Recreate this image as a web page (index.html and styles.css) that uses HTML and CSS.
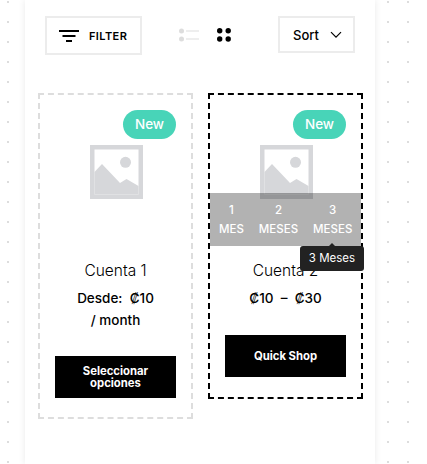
FILE: index.html
```html
<!DOCTYPE html>
<html lang="es">
<head>
<meta charset="utf-8">
<title>Shop</title>
<link rel="stylesheet" href="styles.css">
</head>
<body>
<main class="sheet">
  <div class="toolbar">
    <button class="filter">
      <svg width="20" height="12" viewBox="0 0 20 12"><path d="M0 1h20M3.500 6h13M7 11h6" stroke="#000" stroke-width="2"/></svg>
      <span>FILTER</span>
    </button>
    <div class="views">
      <svg width="20" height="14" viewBox="0 0 20 14"><circle cx="2.500" cy="3" r="2.500" fill="#ddd"/><circle cx="2.500" cy="11" r="2.500" fill="#ddd"/><path d="M7 3h13M7 11h13" stroke="#ddd"/></svg>
      <svg width="14" height="14" viewBox="0 0 14 14"><circle cx="2.700" cy="2.700" r="2.700"/><circle cx="11.200" cy="2.700" r="2.700"/><circle cx="2.700" cy="11" r="2.700"/><circle cx="11.200" cy="11" r="2.700"/></svg>
    </div>
    <button class="sort">
      <span>Sort</span>
      <svg width="12" height="8" viewBox="0 0 12 8"><path d="M1 1.200l5 5 5-5" fill="none" stroke="#000" stroke-width="1.200"/></svg>
    </button>
  </div>
  <div class="grid">
    <article class="card">
      <span class="badge">New</span>
      <div class="thumb">
        <svg class="placeholder" width="53" height="54" viewBox="0 0 53 54"><rect width="53" height="54" fill="#d6d7da"/><rect x="4.500" y="4.500" width="44" height="45" fill="#fff"/><path d="M4.500 27l7.500-8 18 19 6.500-4 12 7v8.500h-44z" fill="#d6d7da"/><circle cx="35.500" cy="17.300" r="5.500" fill="#d6d7da"/></svg>
      </div>
      <h3 class="name">Cuenta 1</h3>
      <p class="price">Desde: &nbsp;₡10<br>/ month</p>
      <a class="cta">Seleccionar<br>opciones</a>
    </article>
    <article class="card card-active">
      <span class="badge">New</span>
      <div class="thumb">
        <svg class="placeholder" width="53" height="54" viewBox="0 0 53 54"><rect width="53" height="54" fill="#d6d7da"/><rect x="4.500" y="4.500" width="44" height="45" fill="#fff"/><path d="M4.500 27l7.500-8 18 19 6.500-4 12 7v8.500h-44z" fill="#d6d7da"/><circle cx="35.500" cy="17.300" r="5.500" fill="#d6d7da"/></svg>
        <div class="terms">
          <span>1<br>MES</span>
          <span>2<br>MESES</span>
          <span>3<br>MESES</span>
        </div>
        <div class="tooltip">3 Meses</div>
      </div>
      <h3 class="name">Cuenta 2</h3>
      <p class="price price-range">₡10 &nbsp;–&nbsp; ₡30</p>
      <a class="cta">Quick Shop</a>
    </article>
  </div>
</main>
</body>
</html>
```
FILE: styles.css
```css
* { box-sizing: border-box; }
html, body { margin: 0; height: 100%; }
body {
  width: 427px;
  height: 464px;
  overflow: hidden;
  background-color: #fff;
  background-image: radial-gradient(circle at 1px 1px, #ddd 1.200px, transparent 1.300px);
  background-size: 20px 20px;
  background-position: 7px 1px;
  font-family: "Inter", "Liberation Sans", sans-serif;
  color: #000;
}
.sheet {
  margin-left: 25px;
  width: 350px;
  height: 464px;
  padding: 16px 12px 0 13px;
  background: #fff;
  box-shadow: 0 0 7px rgba(0, 0, 0, .09);
}
.toolbar {
  display: flex;
  align-items: flex-start;
  justify-content: space-between;
  padding: 0 8px 0 7px;
  height: 39px;
}
button { background: #fff; color: #000; font-family: inherit; cursor: pointer; }
.filter {
  display: flex;
  align-items: center;
  gap: 10px;
  width: 97px;
  height: 39px;
  padding: 0 0 0 12px;
  border: 2px solid #ececec;
  font-size: 11px;
  font-weight: 600;
  letter-spacing: .4px;
}
.views { display: flex; align-items: center; gap: 18px; margin: 12px 10px 0 0; }
.sort {
  display: flex;
  align-items: center;
  gap: 11px;
  width: 77px;
  height: 37px;
  padding: 0 0 0 13px;
  border: 2px solid #ececec;
  font-size: 13px;
  font-weight: 500;
}
.grid {
  display: flex;
  align-items: flex-start;
  gap: 15px;
  margin-top: 38px;
}
.card {
  position: relative;
  flex: none;
  width: 155px;
  height: 326px;
  padding: 0 15px;
  border: 2px dashed #ddd;
  text-align: center;
}
.card-active { height: 306px; border-color: #000; }
.badge {
  position: absolute;
  top: 15px;
  right: 15px;
  width: 53px;
  height: 29px;
  border-radius: 15px;
  background: #48d4b8;
  color: #fff;
  font-size: 13.500px;
  font-weight: 500;
  line-height: 29px;
}
.thumb { height: 153px; padding-top: 50px; }
.placeholder { display: block; margin-left: 35px; }
.terms {
  position: absolute;
  left: 0;
  right: 0;
  top: 98px;
  height: 53px;
  display: flex;
  gap: 15px;
  padding: 8px 0 0 9px;
  background: rgba(0, 0, 0, .3);
  color: #fff;
  font-size: 11.500px;
  font-weight: 500;
  line-height: 19px;
  text-align: center;
}
.tooltip {
  position: absolute;
  top: 151px;
  right: -3px;
  width: 64px;
  height: 25px;
  border-radius: 3px;
  background: #222;
  color: #fff;
  font-size: 11.500px;
  line-height: 24px;
}
.tooltip::before {
  content: "";
  position: absolute;
  top: -3px;
  left: 28px;
  border: 4px solid transparent;
  border-top: 0;
  border-bottom-color: #222;
}
.name {
  margin: 12px 0 0;
  font-size: 15.500px;
  font-weight: 300;
  line-height: 22px;
}
.price {
  margin: 5px 0 0;
  font-size: 13.500px;
  font-weight: 500;
  line-height: 22px;
  height: 44px;
}
.price-range { height: 23px; }
.cta {
  display: flex;
  align-items: center;
  justify-content: center;
  height: 42px;
  margin-top: 25px;
  background: #000;
  color: #fff;
  font-size: 11.300px;
  font-weight: 700;
  line-height: 12px;
}
```
